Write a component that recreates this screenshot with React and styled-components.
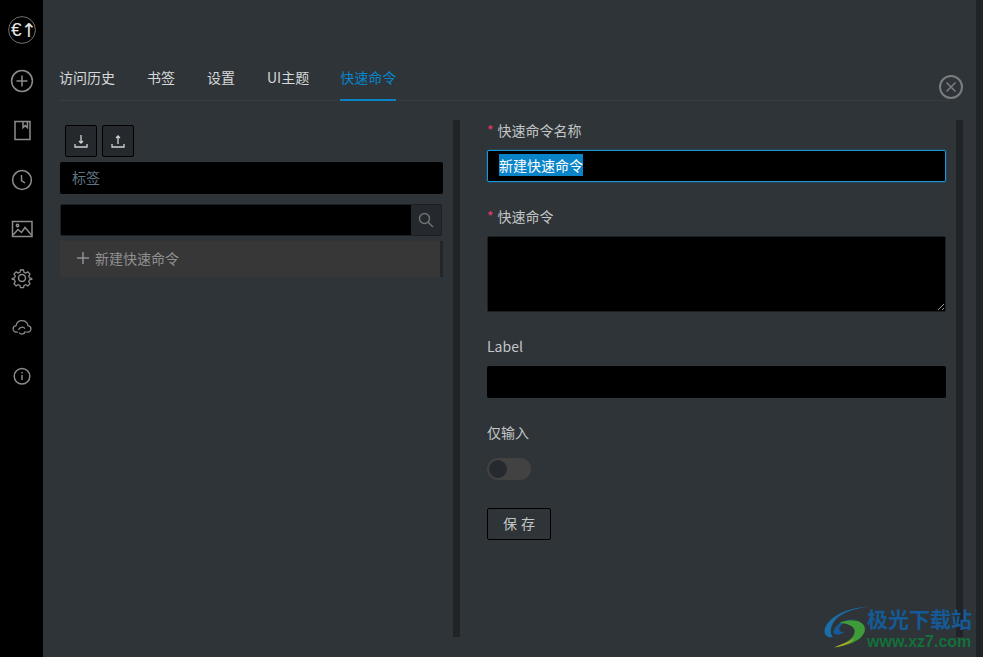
import styled, { createGlobalStyle } from "styled-components";

const GlobalStyle = createGlobalStyle`
  html, body, #root {
    margin: 0;
    height: 100%;
    overflow: hidden;
  }
  * {
    box-sizing: border-box;
  }
  body {
    font-family: "Noto Sans CJK SC", "Noto Sans", sans-serif;
    font-size: 14px;
    color: #d0d2d3;
    background: #2e3438;
  }
`;

const Layout = styled.div`
  position: relative;
  display: flex;
  width: 983px;
  height: 657px;
`;

const Sidebar = styled.nav`
  flex: 0 0 43px;
  display: flex;
  flex-direction: column;
  align-items: center;
  padding-top: 16px;
  background: #000;
  color: #8c8c8c;
`;

const Logo = styled.svg`
  width: 28px;
  height: 28px;
  margin-bottom: 12.5px;
`;

const NavItem = styled.div`
  height: 49.25px;
  display: flex;
  align-items: center;
  justify-content: center;
`;

const Main = styled.main`
  position: relative;
  flex: 1;
  display: flex;
  flex-direction: column;
  padding: 66px 26px 20px 16px;
  min-width: 0;
`;

const Strip = styled.div`
  flex: 0 0 7px;
  background: #212427;
`;

const Tabs = styled.div`
  display: flex;
  gap: 32px;
  height: 35px;
  border-bottom: 1px solid #383c40;
`;

const Tab = styled.div`
  height: 35px;
  margin-left: ${(p) => (p.$active ? "-1px" : "0")};
  line-height: 22px;
  font-size: 14px;
  color: ${(p) => (p.$active ? "#0a84c8" : "#d6d8d9")};
  border-bottom: 2px solid ${(p) => (p.$active ? "#0a84c8" : "transparent")};
`;

const CloseButton = styled.svg`
  position: absolute;
  top: 75px;
  left: 896px;
  width: 24px;
  height: 24px;
  color: #7b7e80;
`;

const Columns = styled.div`
  flex: 1;
  display: flex;
  margin-top: 19px;
  min-height: 0;
`;

const LeftPane = styled.section`
  flex: 0 0 394px;
  display: flex;
  flex-direction: column;
  padding: 5px 10px 0 1px;
`;

const Toolbar = styled.div`
  display: flex;
  gap: 5px;
  padding-left: 5px;
  margin-bottom: 5px;
`;

const IconButton = styled.button`
  width: 32px;
  height: 32px;
  padding: 0;
  display: flex;
  align-items: center;
  justify-content: center;
  background: #25282c;
  border: 1px solid #000;
  border-radius: 2px;
  color: #d0d2d3;
`;

const TagField = styled.div`
  height: 32px;
  padding: 0 12px;
  line-height: 30px;
  background: #000;
  border-radius: 2px;
  color: #5f7480;
  font-size: 14px;
`;

const SearchRow = styled.div`
  display: flex;
  width: 382px;
  height: 32px;
  margin-top: 10px;
  background: #000;
  border: 1px solid #1d2023;
  border-radius: 2px;
`;

const SearchInput = styled.input`
  flex: 1;
  min-width: 0;
  background: transparent;
  border: 0;
  outline: 0;
`;

const SearchButton = styled.div`
  width: 31px;
  display: flex;
  align-items: center;
  justify-content: center;
  background: #25282c;
  border-left: 1px solid #000;
  color: #6f7275;
`;

const NewRow = styled.div`
  display: flex;
  align-items: center;
  gap: 5px;
  height: 36px;
  margin-top: 5px;
  padding: 0 0 2px 16px;
  background: #373737;
  border-right: 3px solid #232629;
  color: #8f9091;
  font-size: 14px;
`;

const Scrollbar = styled.div`
  flex: 0 0 7px;
  background: #212427;
`;

const RightPane = styled.section`
  flex: 0 0 496px;
  display: flex;
  flex-direction: column;
  padding: 0 10px 0 27px;
  margin-top: -1px;
`;

const Label = styled.label`
  display: block;
  height: 22px;
  line-height: 22px;
  margin-top: ${(p) => p.$gap || 0}px;
  margin-bottom: 9px;
  font-size: 14px;
  color: #c4c6c7;
`;

const Star = styled.span`
  color: #f0386e;
  margin-right: 4px;
  font-size: 14px;
`;

const NameField = styled.div`
  height: 32px;
  padding: 0 11px;
  line-height: 29px;
  background: #000;
  border: 1px solid #1b96d6;
  border-radius: 2px;
  box-shadow: 0 0 2px rgba(27, 150, 214, 0.6);
  color: #fff;
`;

const Selected = styled.span`
  display: inline-block;
  height: 22px;
  line-height: 22px;
  background: #0a84c8;
`;

const CommandArea = styled.textarea`
  display: block;
  width: 100%;
  height: 76px;
  background: #000;
  border: 1px solid #1d2023;
  border-radius: 2px;
  outline: 0;
  color: #fff;
`;

const TextField = styled.input`
  display: block;
  width: 100%;
  height: 32px;
  background: #000;
  border: 0;
  border-radius: 2px;
  outline: 0;
`;

const Toggle = styled.div`
  width: 44px;
  height: 22px;
  margin-top: 6px;
  padding: 2px;
  background: #424242;
  border-radius: 11px;
`;

const Knob = styled.div`
  width: 18px;
  height: 18px;
  background: #262a2f;
  border-radius: 50%;
`;

const SaveButton = styled.button`
  width: 64px;
  height: 32px;
  margin-top: 28px;
  padding: 0 0 2px 4px;
  background: transparent;
  border: 1px solid #000;
  border-radius: 2px;
  color: #c4c6c7;
  font-family: inherit;
  font-size: 14px;
  letter-spacing: 4px;
`;

const Watermark = styled.div`
  position: absolute;
  right: 4px;
  bottom: 7px;
  display: flex;
  align-items: center;
  gap: 0;
`;

const MarkLogo = styled.svg`
  width: 47px;
  height: 45px;
  margin-right: -3px;
`;

const MarkText = styled.div`
  display: flex;
  flex-direction: column;
  line-height: 1;
`;

const MarkTitle = styled.span`
  color: #155a96;
  font-size: 21px;
  font-weight: 700;
  line-height: 24px;
`;

const MarkUrl = styled.span`
  margin-top: 3px;
  color: #12703a;
  font-family: "Liberation Sans", sans-serif;
  font-size: 16px;
  font-weight: 700;
  line-height: 17px;
`;

const Icon = ({ children, size = 24, sw = 1.5 }) => (
  <svg
    width={size}
    height={size}
    viewBox={`0 0 ${size} ${size}`}
    fill="none"
    stroke="currentColor"
    strokeWidth={sw}
  >
    {children}
  </svg>
);

export default function App() {
  return (
    <>
      <GlobalStyle />
      <Layout>
        <Sidebar>
          <Logo viewBox="0 0 28 28">
            <circle cx="14" cy="14" r="13.4" fill="none" stroke="#8c8c8c" strokeWidth="0.8" />
            <text x="3" y="20" fill="#e8e8e8" fontSize="19" fontFamily="Liberation Sans">
              €
            </text>
            <text x="13" y="21" fill="#e8e8e8" fontSize="19" fontFamily="DejaVu Sans">
              ↑
            </text>
          </Logo>
          <NavItem>
            <Icon>
              <circle cx="12" cy="12" r="10.4" />
              <path d="M12 6.5v11M6.5 12h11" />
            </Icon>
          </NavItem>
          <NavItem>
            <Icon>
              <path d="M5 3.6h15v18H5zM13 3.600v6l2.200-2 2.200 2v-6" />
            </Icon>
          </NavItem>
          <NavItem>
            <Icon>
              <circle cx="12" cy="12" r="9.4" />
              <path d="M11.5 7v5.5l3.5 2.5" />
            </Icon>
          </NavItem>
          <NavItem>
            <Icon>
              <path d="M2.500 4.500h19.500v15H2.500z" />
              <circle cx="7.500" cy="8.500" r="1.200" />
              <path d="M3 18l5-5.500 3.500 3 3.500-5 6.500 7.500" />
            </Icon>
          </NavItem>
          <NavItem>
            <Icon>
              <circle cx="12" cy="12" r="3.500" />
              <g transform="translate(12 12) scale(.85) translate(-12 -12)">
                <path d="M10.200 2.600h3.600l.6 2.800 2 .9 2.500-1.500 2.500 2.600-1.500 2.400.9 2.100 2.700.6v1l-2.700.7-.9 2.100 1.500 2.400-2.500 2.600-2.500-1.500-2 .9-.6 2.700h-3.600l-.6-2.700-2-.9-2.500 1.500-2.500-2.600 1.500-2.400-.9-2.100-2.700-.7v-1l2.700-.6.900-2.100-1.500-2.400 2.500-2.600 2.500 1.500 2-.9z" />
              </g>
            </Icon>
          </NavItem>
          <NavItem>
            <Icon>
              <g transform="translate(12 12) scale(.85) translate(-12 -12)">
                <path d="M7 18H5.500C3 18 1.500 16 1.500 14.200c0-2 1.500-3.400 3.500-3.700C5.500 7 8.300 4.500 12 4.500s6.500 2.500 7 6c2 .3 3.500 1.700 3.500 3.700 0 1.800-1.500 3.800-4 3.800H17" />
                <path d="M8 15.500a4.200 4.200 0 0 1 7.500-1.500M16 17a4.200 4.200 0 0 1-7.500 1.500" />
              </g>
            </Icon>
          </NavItem>
          <NavItem>
            <Icon>
              <circle cx="12" cy="11.200" r="7.800" />
              <path d="M12 10v5M12 7v1.500" />
            </Icon>
          </NavItem>
        </Sidebar>

        <Main>
          <Tabs>
            <Tab>访问历史</Tab>
            <Tab>书签</Tab>
            <Tab>设置</Tab>
            <Tab>UI主题</Tab>
            <Tab $active>快速命令</Tab>
          </Tabs>
          <CloseButton viewBox="0 0 24 24" fill="none" stroke="currentColor">
            <circle cx="12" cy="12" r="11" strokeWidth="2" />
            <path d="M7.500 7.500l9 9M16.500 7.500l-9 9" strokeWidth="1.500" />
          </CloseButton>

          <Columns>
            <LeftPane>
              <Toolbar>
                <IconButton>
                  <Icon size={16} sw={1.3}>
                    <path d="M8 2v8M6 8l2 2 2-2M2 11v3h12v-3" />
                  </Icon>
                </IconButton>
                <IconButton>
                  <Icon size={16} sw={1.3}>
                    <path d="M8 11V3M6 5l2-2 2 2M2 11v3h12v-3" />
                  </Icon>
                </IconButton>
              </Toolbar>
              <TagField>标签</TagField>
              <SearchRow>
                <SearchInput />
                <SearchButton>
                  <Icon size={16}>
                    <circle cx="6.500" cy="6.500" r="5" />
                    <path d="M10 10l5 5" />
                  </Icon>
                </SearchButton>
              </SearchRow>
              <NewRow>
                <Icon size={14}>
                  <path d="M7 1v12M1 7h12" />
                </Icon>
                新建快速命令
              </NewRow>
            </LeftPane>
            <Scrollbar />
            <RightPane>
              <Label>
                <Star>*</Star>快速命令名称
              </Label>
              <NameField>
                <Selected>新建快速命令</Selected>
              </NameField>
              <Label $gap={23}>
                <Star>*</Star>快速命令
              </Label>
              <CommandArea />
              <Label $gap={23}>Label</Label>
              <TextField />
              <Label $gap={23}>仅输入</Label>
              <Toggle>
                <Knob />
              </Toggle>
              <SaveButton>保存</SaveButton>
            </RightPane>
            <Scrollbar />
          </Columns>

          <Watermark>
            <MarkLogo viewBox="0 0 46 43" fill="none">
              <path d="M45 1C28 2 8 8 2 22c-2 6 2 10 8 9C5 26 8 14 20 8 28 4 38 2 45 1z" fill="#1a6fa8" />
              <path d="M10 26c2-8 12-14 24-12-8-1-16 3-18 8-1 3 2 5 6 3-4 4-11 5-12 1z" fill="#155a96" />
              <path d="M16 17c10-5 26-3 25 7-1 9-14 15-30 17 12-4 20-9 20-16 0-5-8-8-15-8z" fill="#3f9a3a" />
              <path d="M11 41c6-3 14-5 20-9-4 5-12 8-20 9z" fill="#b5a71f" />
            </MarkLogo>
            <MarkText>
              <MarkTitle>极光下载站</MarkTitle>
              <MarkUrl>www.xz7.com</MarkUrl>
            </MarkText>
          </Watermark>
        </Main>

        <Strip />
      </Layout>
    </>
  );
}
